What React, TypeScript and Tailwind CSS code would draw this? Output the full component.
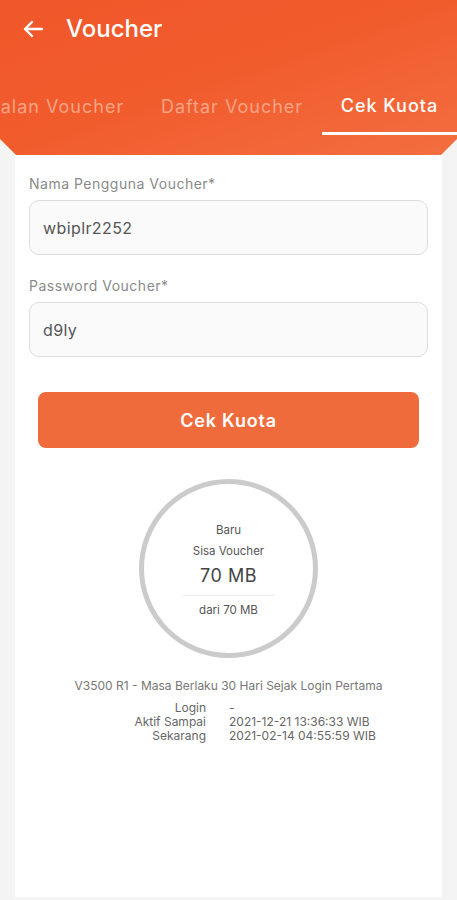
import React from 'react';

const font = { fontFamily: 'Inter, "Noto Sans", sans-serif' };

const Field: React.FC<{ label: string; value: string }> = ({ label, value }) => (
  <div className="flex flex-col">
    <label className="text-[14px] tracking-[0.5px] text-[#8a8a8a] leading-none mb-[9px]">{label}</label>
    <div className="h-[55px] rounded-[10px] border border-[#dcdcdc] bg-[#fafafa] flex items-center px-[13px]">
      <span className="text-[16px] tracking-[0.4px] text-[#555]">{value}</span>
    </div>
  </div>
);

const App: React.FC = () => {
  return (
    <div className="min-h-[900px] bg-[#f4f4f4]" style={font}>
      <div className="h-[155px] bg-gradient-to-br from-[#f0572a] via-[#f15c2d] to-[#f36e40] [clip-path:polygon(0_0,100%_0,100%_139px,441px_155px,16px_155px,0_139px)] flex flex-col">
        <div className="h-[58px] flex items-center pl-[22px] gap-[22px]">
          <svg width="22" height="18" viewBox="0 0 22 18" fill="none" stroke="white" strokeWidth="2.4" strokeLinecap="round" strokeLinejoin="round">
            <path d="M20 9H3M10 2L3 9l7 7" />
          </svg>
          <span className="text-white text-[24px] font-medium">Voucher</span>
        </div>
        <div className="mt-[24px] overflow-hidden">
          <div className="flex -ml-[40px] h-[53px] pb-[4px]">
            <div className="w-[182px] shrink-0 flex items-center justify-center text-[18px] tracking-[1px] text-[#f6a484]">Jualan Voucher</div>
            <div className="w-[180px] shrink-0 flex items-center justify-center text-[18px] tracking-[1px] text-[#f6a484]">Daftar Voucher</div>
            <div className="w-[135px] shrink-0 flex items-center justify-center text-[18px] tracking-[1px] text-white font-medium border-b-[3px] border-white -mb-[4px] pb-[4px]">Cek Kuota</div>
          </div>
        </div>
      </div>

      <div className="mx-[15px] bg-white min-h-[742px] px-[14px] pt-[22px] pb-6 flex flex-col">
        <Field label="Nama Pengguna Voucher*" value="wbiplr2252" />
        <div className="h-[24px]" />
        <Field label="Password Voucher*" value="d9ly" />
        <button className="mt-[35px] mx-[9px] h-[56px] rounded-[8px] bg-[#f06b3c] text-white text-[18px] tracking-[0.8px] font-semibold">Cek Kuota</button>

        <div className="mt-[31px] self-center w-[179px] h-[179px] rounded-full border-[5px] border-[#cbcbcb] flex flex-col items-center justify-center pt-[4px] text-[#555]">
          <span className="text-[11.5px] leading-none">Baru</span>
          <span className="text-[11.5px] leading-none mt-[10px]">Sisa Voucher</span>
          <span className="text-[18px] tracking-[0.5px] leading-none mt-[9px] text-[#444]">70 MB</span>
          <div className="w-[92px] h-px bg-[#eeeeee] mt-[10px]" />
          <span className="text-[11.5px] leading-none mt-[9px]">dari 70 MB</span>
        </div>

        <p className="mt-[19px] text-center text-[12px] text-[#777]">V3500 R1 - Masa Berlaku 30 Hari Sejak Login Pertama</p>
        <div className="mt-[6px] grid grid-cols-[177px_1fr] gap-x-[23px] text-[12px] text-[#666] leading-[14px]">
          <span className="text-right">Login</span>
          <span>-</span>
          <span className="text-right">Aktif Sampai</span>
          <span>2021-12-21 13:36:33 WIB</span>
          <span className="text-right">Sekarang</span>
          <span>2021-02-14 04:55:59 WIB</span>
        </div>
      </div>
    </div>
  );
};

export default App;
